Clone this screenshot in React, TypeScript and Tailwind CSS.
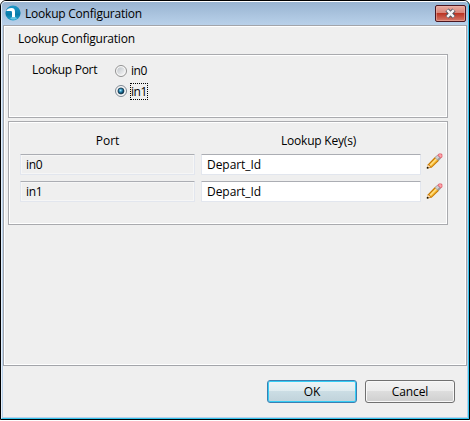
import type { ReactNode } from "react";

function Logo() {
  return (
    <svg width="16" height="16" viewBox="0 0 16 16" className="shrink-0">
      <defs>
        <linearGradient id="ball" x1="0" y1="0" x2="0" y2="1">
          <stop offset="0" stopColor="#219aca" />
          <stop offset=".6" stopColor="#087ba9" />
          <stop offset="1" stopColor="#27a6d0" />
        </linearGradient>
      </defs>
      <circle cx="8" cy="8" r="7.6" fill="url(#ball)" />
      <path d="M1.2 6C2 4 4 3 6.5 3C9.2 3 10 4.3 10 7V12H7V7.4C7 6.3 6.4 6 5.4 6Z" fill="#fff" />
      <path d="M5 13.2l2-1.2h3.2l2 1.2-2 1.3H6.8z" fill="#67c4e3" />
    </svg>
  );
}

function Pencil() {
  return (
    <svg width="17" height="17" viewBox="0 0 17 17" className="block">
      <path d="M1 15.5L2 11.2L9.4 3.6L13.2 7.4L5.6 14.8Z" fill="#c87800" />
      <path d="M3.2 11.8L9.6 5.2L11.8 7.3L5.3 13.8Z" fill="#f7bd38" />
      <path d="M3.6 11.7L10 5.2L11 6.2L4.6 12.7Z" fill="#ffe08a" />
      <path d="M1.4 14.6L2.3 12L4.8 14.2Z" fill="#f8dfbd" />
      <path d="M0.8 14H2.4V15.6H.8Z" fill="#141008" />
      <path d="M8.8 4.4L11.4 1.8L15 5.4L12.4 8Z" fill="#9a9a9e" />
      <path d="M9.4 4.6L11.6 2.4L13.4 4.2L11.2 6.4Z" fill="#cfcfd2" />
      <path d="M11.3 2.2L13 .5H15.3L16.4 1.6V3.9L14.7 5.6Z" fill="#e0606c" />
      <path d="M12.4 2.2L13.3 1.3H14.9L15.6 2V3.4L14.7 4.4Z" fill="#ffa3aa" />
    </svg>
  );
}

function Group({ className, children }: { className: string; children: ReactNode }) {
  return (
    <div className={`w-[440px] border border-[#a9aaae] ${className}`}>
      <div className="h-full border border-white">{children}</div>
    </div>
  );
}

function Radio({ checked }: { checked?: boolean }) {
  return (
    <svg width="12" height="12" viewBox="0 0 12 12" className="shrink-0">
      <defs>
        <linearGradient id="ring" x1="0" y1="0" x2="1" y2="1">
          <stop offset="0" stopColor="#bfc4c9" />
          <stop offset="1" stopColor="#f7f7f7" />
        </linearGradient>
        <radialGradient id="dot" cx=".42" cy=".4">
          <stop offset="0" stopColor="#a8e7ff" />
          <stop offset=".5" stopColor="#2f8fba" />
          <stop offset="1" stopColor="#0a3a56" />
        </radialGradient>
      </defs>
      <circle cx="6" cy="6" r="5.5" fill="#f8f8f8" stroke={checked ? "#7d8791" : "#929292"} />
      <circle cx="6" cy="6" r="3.8" fill="url(#ring)" />
      {checked && <circle cx="6" cy="6" r="3" fill="url(#dot)" stroke="#16384f" strokeWidth=".7" />}
    </svg>
  );
}

function Row({ port }: { port: string }) {
  const field = "h-[21px] rounded-[1px] border border-[#e2e6ee] border-t-[#abadb3] pl-[5px] leading-[20px]";
  return (
    <div className="flex">
      <div className={`w-[175px] tracking-[-0.3px] shadow-[inset_0_0_0_1px_#f6f6f6] ${field}`}>{port}</div>
      <div className={`ml-1.5 w-[220px] bg-white tracking-[-0.05px] ${field}`}>Depart_Id</div>
    </div>
  );
}

export default function App() {
  return (
    <div className="h-[421px] w-[470px] bg-white font-['Open_Sans','Noto_Sans',sans-serif] text-[12px] text-black">
      <div className="h-[420px] rounded-t-[6px] border border-black bg-[#b9d1ea]">
        <div className="flex h-full flex-col rounded-t-[5px] border border-t-white border-r-[#35c5ee] border-b-[#35c5ee] border-l-[#e5f0fb]">
          <div className="flex h-[23px] shrink-0 items-start rounded-t-[4px] bg-gradient-to-b from-[#99b4d1] to-[#b9d1ea] pl-[3px] pr-0.5">
            <div className="pt-[3px]"><Logo /></div>
            <div className="ml-1 h-[23px] grow leading-[24px] tracking-[-0.22px]">Lookup Configuration</div>
            <button className="mt-[3px] flex h-[17px] w-[31px] items-center justify-center rounded-[2px] border border-[#4b1620] bg-[linear-gradient(#e9aaa0_0%,#d88478_46%,#bb3524_50%,#d5796a_100%)] shadow-[inset_0_0_0_1px_#eeb5aa88]">
              <svg width="13" height="11" viewBox="0 0 13 11">
                <path d="M3 2L10 9M10 2L3 9" stroke="#50535e" strokeWidth="4.4" />
                <path d="M3.2 2.2L9.8 8.8M9.8 2.2L3.2 8.8" stroke="#f4f4f5" strokeWidth="2.5" />
              </svg>
            </button>
          </div>
          <div className="mx-px mb-px flex grow flex-col bg-[#efefef]">
            <div className="h-[341px] w-[464px] border border-[#a3a5aa]">
              <div className="h-full border border-white pr-px">
                <div className="h-[27px] pl-[13px] leading-[23px] tracking-[-0.23px]">Lookup Configuration</div>
                <Group className="ml-[3px] h-[64px]">
                  <div className="flex pt-[5px] pl-[22px]">
                    <div className="w-[83px] leading-[17px] tracking-[-0.3px]">Lookup Port</div>
                    <div className="tracking-[-0.45px]">
                      <div className="flex h-[20px] items-center"><Radio /><span className="ml-[4px]">in0</span></div>
                      <div className="flex h-[20px] items-center"><Radio checked /><span className="ml-[3px] h-[17px] w-[18px] border border-dotted border-black leading-[15px]">in1</span></div>
                    </div>
                  </div>
                </Group>
                <Group className="mt-[3px] ml-[3px] h-[104px]">
                  <div className="flex h-[31px] pl-[10px] pt-[8px] leading-[20px]">
                    <div className="w-[175px] text-center">Port</div>
                    <div className="ml-1.5 w-[220px] pl-[15px] text-center tracking-[-0.2px]">Lookup Key(s)</div>
                  </div>
                  <div className="flex pl-[10px]">
                    <div className="flex flex-col gap-[6px]">
                      <Row port="in0" />
                      <Row port="in1" />
                    </div>
                    <div className="-mt-[1px] ml-[5px] flex flex-col gap-[13px]">
                      <Pencil />
                      <Pencil />
                    </div>
                  </div>
                </Group>
              </div>
            </div>
            <div className="flex gap-2 pt-[14px] pl-[264px]">
              <button className="h-[23px] w-[90px] rounded-[3px] border border-[#3c7fb1] bg-[linear-gradient(#edf4f7_0%,#dfebef_48%,#cbdde4_50%,#c0d2da_100%)] leading-[21px] shadow-[inset_0_0_0_1px_#35cdf5]">OK</button>
              <button className="h-[23px] w-[90px] rounded-[3px] border border-[#707070] bg-[linear-gradient(#f2f2f2_0%,#ebebeb_48%,#dddddd_50%,#cfcfcf_100%)] leading-[21px] tracking-[-0.1px] shadow-[inset_0_0_0_1px_#f8f8f8]">Cancel</button>
            </div>
          </div>
        </div>
      </div>
    </div>
  );
}
